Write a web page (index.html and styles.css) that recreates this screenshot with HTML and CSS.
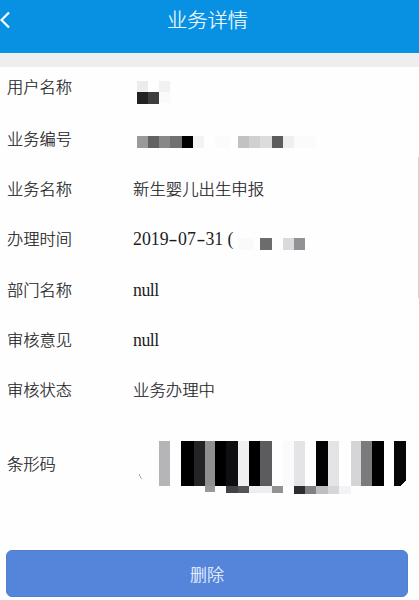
FILE: index.html
```html
<!DOCTYPE html>
<html lang="zh-CN">
<head>
<meta charset="utf-8">
<title>业务详情</title>
<link rel="stylesheet" href="styles.css">
</head>
<body>
<header class="bar">
  <svg class="back" width="12" height="20" viewBox="0 0 12 20"><path d="M9 2.5 L1.5 10 L9 17.5" fill="none" stroke="#fff" stroke-width="2.2"/></svg>
  <h1 class="title">业务详情</h1>
</header>
<main class="details">
  <div class="row"><span class="label">用户名称</span>
    <svg class="mask" width="40" height="24" viewBox="133 80 40 24" shape-rendering="crispEdges"><path fill="#ececee" d="M137 81h11v11h-11z"/><path fill="#f1f1f3" d="M159 81h11v11h-11z"/><path fill="#fafafa" d="M159 92h11v11h-11z"/><path fill="#222224" d="M137 92h11v12h-11z"/><path fill="#3e3e40" d="M148 92h11v12h-11z"/></svg>
  </div>
  <div class="row"><span class="label">业务编号</span>
    <svg class="mask" width="190" height="12" viewBox="133 136 190 12" shape-rendering="crispEdges"><path fill="#999" d="M137 136h11v12h-11z"/><path fill="#626264" d="M148 136h11v12h-11z"/><path fill="#888" d="M159 136h11v12h-11z"/><path fill="#707072" d="M170 136h12v12h-12z"/><path d="M182 136h11v12h-11z"/><path fill="#f3f3f5" d="M193 136h11v12h-11z"/><path fill="#fbfbfb" d="M215 136h15v12h-15zM294 136h22v12h-22z"/><path fill="#c2c2c4" d="M238 136h11v12h-11z"/><path fill="#d0d0d2" d="M249 136h11v12h-11z"/><path fill="#dcdcde" d="M260 136h12v12h-12z"/><path fill="#5c5c5e" d="M272 136h11v12h-11z"/><path fill="#efeff1" d="M283 136h11v12h-11z"/></svg>
  </div>
  <div class="row"><span class="label">业务名称</span><span class="value">新生婴儿出生申报</span></div>
  <div class="row"><span class="label">办理时间</span><span class="value latin date">2019<span class="dash">-</span>07<span class="dash">-</span>31 (</span>
    <svg class="mask time-mask" width="72" height="12" viewBox="237 238 72 12" shape-rendering="crispEdges"><path fill="#fafafa" d="M238 238h16v12h-16z"/><path fill="#6c6c6e" d="M260 238h12v12h-12z"/><path fill="#dadadc" d="M283 238h11v12h-11z"/><path fill="#929294" d="M294 238h11v12h-11z"/></svg>
  </div>
  <div class="row"><span class="label">部门名称</span><span class="value latin">null</span></div>
  <div class="row"><span class="label">审核意见</span><span class="value latin">null</span></div>
  <div class="row"><span class="label">审核状态</span><span class="value">业务办理中</span></div>
  <div class="row barcode-row"><span class="label">条形码</span>
    <svg class="barcode" width="280" height="56" viewBox="133 440 280 56" shape-rendering="crispEdges">
      <path fill="#aaa" d="M139 474l1 4 2 1-2-4z"/>
      <path fill="#b5b5b7" d="M159 441h11v45h-11z"/><path d="M181 441h13v45h-13z"/><path fill="#242426" d="M194 441h11v45h-11z"/><path fill="#909092" d="M205 441h10v45h-10z"/><path d="M215 441h11v45h-11z"/><path fill="#0f0f11" d="M226 441h12v45h-12z"/><path fill="#f0f0f2" d="M238 441h11v45h-11z"/><path d="M249 441h11v45h-11z"/><path fill="#5c5c5e" d="M260 441h12v45h-12z"/><path fill="#fafafc" d="M283 441h11v45h-11z"/><path fill="#e4e4e6" d="M294 441h11v45h-11z"/><path fill="#020204" d="M316 441h12v45h-12z"/><path fill="#e4e4e6" d="M328 441h11v45h-11z"/><path fill="#d5d5d7" d="M351 441h10v45h-10z"/><path fill="#7b7b7d" d="M361 441h11v45h-11z"/><path d="M372 441h12v45h-12z"/><path fill="#060608" d="M394 441h12v39l-6 6h-6z"/>
      <path fill="#999" d="M205 486h10v6h-10z"/><path fill="#424244" d="M226 486h12v7h-12z"/><path fill="#555557" d="M238 486h11v7h-11z"/><path fill="#eeeef0" d="M249 486h23v7h-23z"/><path fill="#929294" d="M272 486h11v7h-11z"/><path fill="#2d2d2f" d="M294 486h11v8h-11z"/><path fill="#818183" d="M305 486h11v8h-11z"/><path fill="#bebec0" d="M316 486h12v8h-12z"/><path fill="#d6d6d8" d="M328 486h11v8h-11z"/><path fill="#f3f3f5" d="M339 486h12v8h-12z"/>
    </svg>
  </div>
</main>
<button class="delete" type="button">删除</button>
<div class="scrollbar"></div>
</body>
</html>
```
FILE: styles.css
```css
* { box-sizing: border-box; }

body {
  margin: 0;
  height: 600px;
  overflow: hidden;
  position: relative;
  background: #fefefe;
  color: #1c1c1e;
  font-family: "KaiTi", "STKaiti", "Noto Sans CJK SC", sans-serif;
  font-weight: 300;
  -webkit-text-stroke: 0.2px;
}

.bar {
  display: flex;
  align-items: flex-start;
  height: 53px;
  background: #0891e2;
}

.back { margin-top: 10px; }

.title {
  flex: 1;
  margin: 4px 16px 0 0;
  color: #f2fbff;
  font-size: 20.3px;
  font-weight: 300;
  line-height: 31px;
  text-align: center;
}

.details {
  border-top: 14px solid #eeeef0;
}

.row {
  display: flex;
  align-items: center;
  height: 50.35px;
  padding-left: 7px;
}

.row:first-child { height: 48px; }
.row:first-child .label { margin-top: -10px; }
.row:first-child .mask { margin-top: 2px; }

.label {
  width: 126px;
  font-size: 16.3px;
  line-height: 24px;
  margin-top: -5px;
}

.value {
  font-size: 16.4px;
  line-height: 24px;
  margin-top: -5px;
}

.latin {
  font-family: "Liberation Serif", serif;
  font-size: 17.8px;
  font-weight: 400;
  letter-spacing: -0.5px;
  margin-top: -3px;
  -webkit-text-stroke: 0;
}

.date {
  width: 104px;
  letter-spacing: 0;
  white-space: nowrap;
}

.dash {
  display: inline-block;
  margin: 0 1.8px;
  transform: scaleX(1.5);
}

.mask { display: block; margin-top: 4px; }
.time-mask { margin-top: 6px; }

.barcode-row { height: 98px; align-items: flex-start; padding-top: 23px; }
.barcode-row .label { margin-top: 11px; }
.barcode { display: block; }

.delete {
  display: block;
  width: 402px;
  height: 47px;
  margin: 35px 0 0 6px;
  padding: 0;
  border: 1px solid #5380cc;
  border-radius: 6px;
  background: #5585da;
  color: #eef7ff;
  font: inherit;
  font-size: 17px;
  line-height: 40px;
}

.scrollbar {
  position: absolute;
  top: 157px;
  right: 0;
  width: 1px;
  height: 141px;
  background: #d5d5d7;
}
```
